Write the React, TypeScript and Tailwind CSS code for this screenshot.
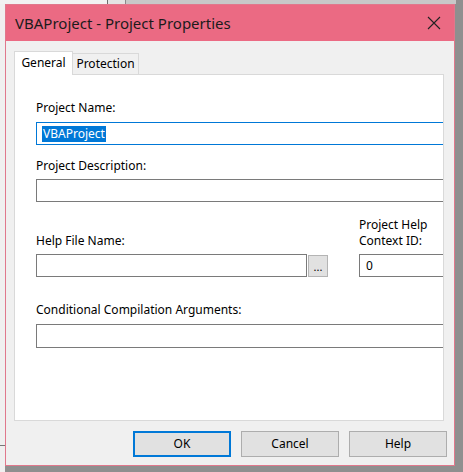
import React from "react";

const font = "font-['Segoe_UI','Noto_Sans',sans-serif]";

function Label({ children, className = "" }: { children: React.ReactNode; className?: string }) {
  return <div className={`text-[12px] leading-[16px] text-[#000] ${className}`}>{children}</div>;
}

function Field({ className = "", children }: { className?: string; children?: React.ReactNode }) {
  return (
    <div className={`h-[23px] bg-white border border-[#7a7a7a] flex items-center text-[12px] ${className}`}>
      {children}
    </div>
  );
}

function DlgButton({ label, focused }: { label: string; focused?: boolean }) {
  return (
    <button
      className={
        focused
          ? "w-[98px] h-[26px] bg-[#e1e1e1] border-2 border-[#0078d7] text-[12px] text-black"
          : "w-[98px] h-[26px] bg-[#e1e1e1] border border-[#adadad] text-[12px] text-black"
      }
    >
      {label}
    </button>
  );
}

export default function App() {
  const [tab, setTab] = React.useState("general");

  return (
    <div className={`w-[463px] h-[472px] bg-[#8f8f8f] overflow-hidden flex flex-col ${font}`}>
      {/* what peeks out behind the dialog */}
      <div className="h-[4px] flex shrink-0">
        <div className="w-[107px] bg-[#f2f2f2]" />
        <div className="w-[1px] bg-[#6d6d6d]" />
        <div className="w-[17px] bg-[#e4e4e4]" />
        <div className="w-[1px] bg-[#8a8a8a]" />
        <div className="w-[330px] bg-[#c8c8c8]" />
      </div>
      <div className="flex flex-1">
        <div className="w-[5px] bg-[#f0f0f0] flex flex-col">
          <div className="h-[441px]" />
          <div className="h-[1px] bg-[#777]" />
        </div>

        <div className="w-[450px] h-[462px] border border-[#e0788c] bg-[#f0f0f0] flex flex-col">
          {/* title bar */}
          <div className="h-[36px] bg-[#eb6a83] flex items-center justify-between pl-[9px] pr-[12px] shrink-0">
            <span className="text-[15px] text-[#1b1b1b]">VBAProject - Project Properties</span>
            <svg width="14" height="14" viewBox="0 0 14 14" className="mr-[1px]">
              <path d="M1 1 L13 13 M13 1 L1 13" stroke="#222" strokeWidth="1.1" fill="none" />
            </svg>
          </div>

          {/* tabs */}
          <div className="pl-[8px] pt-[9px] flex items-end h-[33px] shrink-0">
            <button
              onClick={() => setTab("general")}
              className="relative z-10 w-[59px] h-[24px] -mb-[1px] bg-white border border-b-0 border-[#d9d9d9] text-[12px] text-black flex items-center justify-center pb-[1px]"
            >
              General
            </button>
            <button
              onClick={() => setTab("protection")}
              className="w-[66px] h-[21px] bg-[#f0f0f0] border border-b-0 border-l-0 border-[#d9d9d9] text-[12px] text-black flex items-center justify-center"
            >
              Protection
            </button>
          </div>

          {/* tab panel */}
          <div className="ml-[8px] w-[430px] h-[347px] bg-white border border-[#d9d9d9] overflow-hidden shrink-0">
            {tab === "general" ? (
              <div className="pl-[21px] pt-[25px] w-[460px]">
                <Label>Project Name:</Label>
                <Field className="mt-[6px] w-[420px] border-[#0078d7]">
                  <span className="ml-[5px] bg-[#0078d7] text-white leading-[16px] px-[1px]">VBAProject</span>
                </Field>

                <Label className="mt-[13px]">Project Description:</Label>
                <Field className="mt-[5px] w-[420px]" />

                <div className="flex items-end mt-[15px]">
                  <div className="flex flex-col">
                    <Label>Help File Name:</Label>
                    <Field className="mt-[5px] w-[271px]" />
                  </div>
                  <div className="ml-[1px] w-[20px] h-[22px] bg-[#e1e1e1] border border-[#b4b4b4] text-[11px] leading-[14px] flex items-end justify-center pb-[2px]">
                    ...
                  </div>
                  <div className="ml-[31px] flex flex-col">
                    <Label>Project Help</Label>
                    <Label>Context ID:</Label>
                    <Field className="mt-[5px] w-[100px]">
                      <span className="ml-[6px]">0</span>
                    </Field>
                  </div>
                </div>

                <Label className="mt-[25px]">Conditional Compilation Arguments:</Label>
                <Field className="mt-[6px] w-[420px] h-[24px]" />
              </div>
            ) : (
              <div className="p-[21px] text-[12px]">Lock project for viewing</div>
            )}
          </div>

          {/* dialog buttons */}
          <div className="flex justify-end gap-[10px] pr-[7px] mt-[10px]">
            <DlgButton label="OK" focused />
            <DlgButton label="Cancel" />
            <DlgButton label="Help" />
          </div>
        </div>

        <div className="flex-1 bg-[#8f8f8f]" />
      </div>
    </div>
  );
}
